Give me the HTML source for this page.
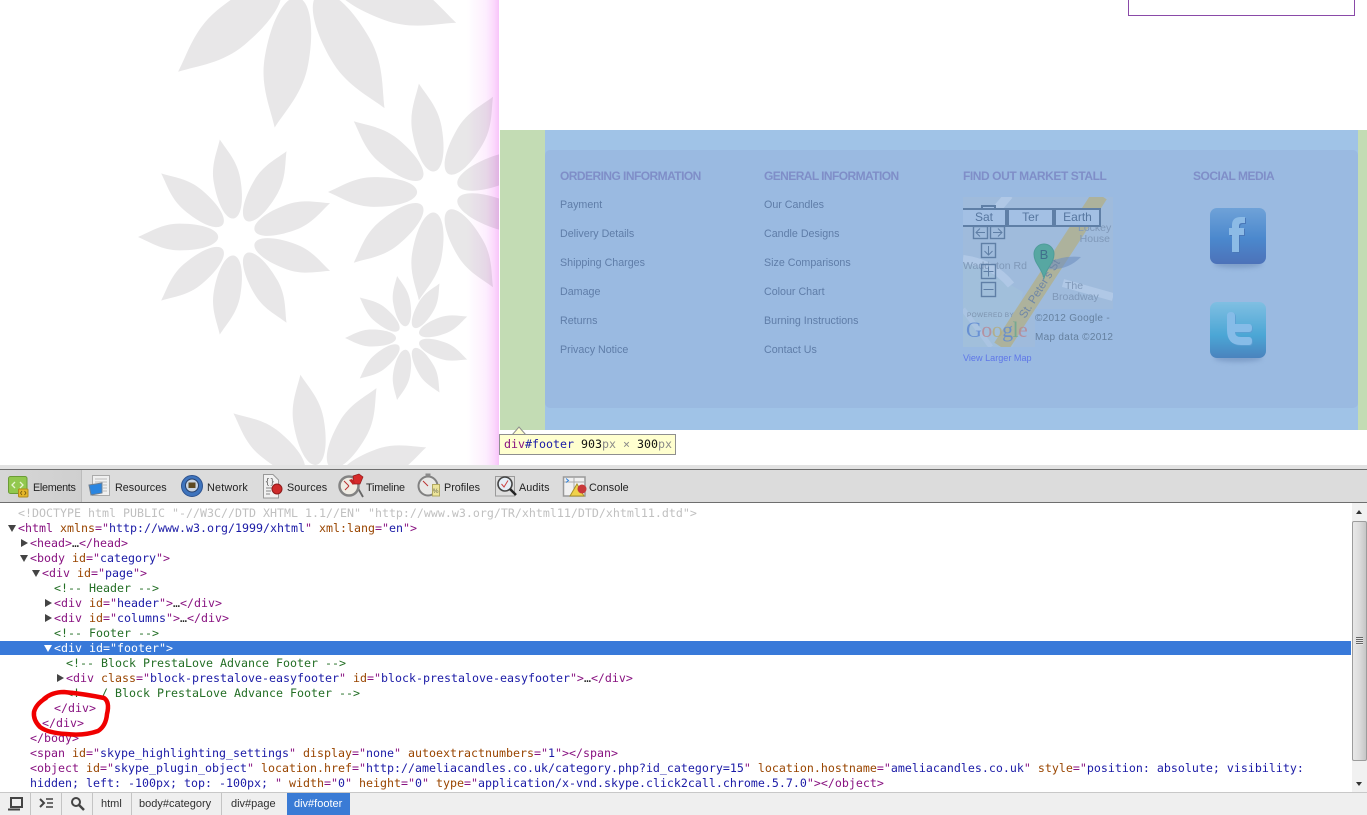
<!DOCTYPE html>
<html lang="en">
<head>
<meta charset="utf-8">
<title>Footer inspector</title>
<style>
html,body{margin:0;padding:0;width:1367px;height:815px;overflow:hidden;background:#fff}
body{position:relative;font-family:"Liberation Sans",Arial,sans-serif}
.a{position:absolute}
.h{position:absolute;font:bold 12px/14px "Liberation Sans",sans-serif;color:#7f8ec8;white-space:nowrap}
.k{position:absolute;font:10.7px/14px "Liberation Sans",sans-serif;color:#5f7da8;white-space:nowrap}
.l{position:absolute;font:11.63px/15px "DejaVu Sans Mono",monospace;white-space:pre;color:#222}
.t{color:#881280}.n{color:#994500}.v{color:#1a1aa6}.c{color:#236e25}.d{color:#c0c0c0}
.dn,.rt{position:absolute;width:0;height:0}
.dn{border-left:4px solid transparent;border-right:4px solid transparent;border-top:7px solid #444}
.rt{border-top:4px solid transparent;border-bottom:4px solid transparent;border-left:7px solid #444}
.tb{position:absolute;top:481px;font:10.8px/14px "Liberation Sans",sans-serif;color:#222;white-space:nowrap}
.cr{position:absolute;top:797px;font:11px/14px "Liberation Sans",sans-serif;color:#303030;white-space:nowrap}
.sep{position:absolute;top:793px;width:1px;height:22px;background:#c4c4c4}
.mb{position:absolute;box-sizing:border-box;border:2px solid #5f7fa6;background:#a3c0e4;color:#56769f;font:12px/14px "Liberation Sans",sans-serif;text-align:center}
.mt{position:absolute;font:10.5px/11px "Liberation Sans",sans-serif;color:#7f98b8;white-space:nowrap}
</style>
</head>
<body>

<!-- flower background -->
<svg class="a" style="left:0;top:0" width="499" height="465" viewBox="0 0 499 465">
<defs>
<path id="p" d="M19 0C19-7 33-13.500 58-13.500C76-13.500 88-5 100 0C88 5 76 13.500 58 13.500C33 13.500 19 7 19 0Z"/>
<g id="f">
<use href="#p" transform="rotate(180)"/><use href="#p" transform="rotate(220)"/><use href="#p" transform="rotate(260)"/>
<use href="#p" transform="rotate(300)"/><use href="#p" transform="rotate(340)"/><use href="#p" transform="rotate(20)"/>
<use href="#p" transform="rotate(60)"/><use href="#p" transform="rotate(100)"/><use href="#p" transform="rotate(140)"/>
</g>
<linearGradient id="pk" x1="0" x2="1" y1="0" y2="0">
<stop offset="0" stop-color="#fff"/><stop offset=".6" stop-color="#fdeefe"/><stop offset=".85" stop-color="#fbd8fc"/><stop offset="1" stop-color="#f8c4fa"/>
</linearGradient>
</defs>
<g fill="#e8e7e8">
<use href="#f" transform="translate(303 -33) scale(1.63)"/>
<use href="#f" transform="translate(237 237) scale(.99)"/>
<use href="#f" transform="translate(438 192) scale(1.1)"/>
<use href="#f" transform="translate(408 338) scale(.63)"/>
<use href="#f" transform="translate(320 486) scale(1.13)"/>
</g>
<rect x="467" y="0" width="32" height="465" fill="url(#pk)" style="mix-blend-mode:multiply"/>
</svg>

<!-- top right box -->
<div class="a" style="left:1128px;top:-2px;width:225px;height:16px;border:1px solid #8a4aa8"></div>

<!-- footer highlight -->
<div class="a" style="left:500px;top:130px;width:867px;height:300px;background:#c3dcb4"></div>
<div class="a" style="left:545px;top:130px;width:813px;height:300px;background:#a0c3e7"></div>
<div class="a" style="left:545px;top:150px;width:813px;height:258px;background:#9abae1;border-radius:5px"></div>

<div class="h" style="left:560px;top:169px;letter-spacing:-.55px">ORDERING INFORMATION</div>
<div class="h" style="left:764px;top:169px;letter-spacing:-.58px">GENERAL INFORMATION</div>
<div class="h" style="left:963px;top:169px;letter-spacing:-.43px">FIND OUT MARKET STALL</div>
<div class="h" style="left:1193px;top:169px;letter-spacing:-.5px">SOCIAL MEDIA</div>

<div class="k" style="left:560px;top:198px">Payment</div>
<div class="k" style="left:560px;top:227px">Delivery Details</div>
<div class="k" style="left:560px;top:256px">Shipping Charges</div>
<div class="k" style="left:560px;top:285px">Damage</div>
<div class="k" style="left:560px;top:314px">Returns</div>
<div class="k" style="left:560px;top:343px">Privacy Notice</div>
<div class="k" style="left:764px;top:198px">Our Candles</div>
<div class="k" style="left:764px;top:227px">Candle Designs</div>
<div class="k" style="left:764px;top:256px">Size Comparisons</div>
<div class="k" style="left:764px;top:285px">Colour Chart</div>
<div class="k" style="left:764px;top:314px">Burning Instructions</div>
<div class="k" style="left:764px;top:343px">Contact Us</div>

<!-- map -->
<svg class="a" style="left:963px;top:197px" width="150" height="150" viewBox="0 0 150 150">
<rect width="150" height="150" fill="#9fbbdc"/>
<path d="M0 60L60 95L50 150H0Z" fill="#a1bfdb"/>
<path d="M46 -2L22 26" stroke="#b0c8e6" stroke-width="9" fill="none"/>
<path d="M0 62Q30 66 48 88" stroke="#b0c8e6" stroke-width="8" fill="none"/>
<path d="M100 86L150 100" stroke="#b0c8e6" stroke-width="8" fill="none"/>
<path d="M0 112L28 150" stroke="#aac4e2" stroke-width="5" fill="none"/>
<path d="M137 -2L38 150" stroke="#adb29c" stroke-width="16" fill="none"/>
<path d="M72 112V150H150V112Z" fill="#9abae1"/>
<path d="M84 66Q100 58 118 60Q104 74 84 72Z" fill="#6f8fc0" opacity=".6"/>
<text transform="translate(62 122) rotate(-58)" font-family="Liberation Sans,sans-serif" font-size="11.5" fill="#6f87a6">St. Peter's St</text>
<path d="M81 81C78 70 71 66 71 57A10 10 0 0 1 91 57C91 66 84 70 81 81Z" fill="#57a7a2" stroke="#4f9c9a"/>
<text x="81" y="62" font-family="Liberation Sans,sans-serif" font-size="13" fill="#406f8c" text-anchor="middle">B</text>
<text x="4" y="120" font-family="Liberation Sans,sans-serif" font-size="6.5" fill="#7c92ad" letter-spacing=".3">POWERED BY</text>
<text x="3" y="140" font-family="Liberation Serif,serif" font-size="22" letter-spacing="-.6" opacity=".85"><tspan fill="#5f8ad2">G</tspan><tspan fill="#b78a96">o</tspan><tspan fill="#b4ad7e">o</tspan><tspan fill="#5f8ad2">g</tspan><tspan fill="#6da78f">l</tspan><tspan fill="#b78a96">e</tspan></text>
</svg>
<div class="mt" style="left:1078px;top:223px;width:32px;text-align:right;line-height:10.500px">Lockey<br>House</div>
<div class="mt" style="left:963px;top:261px;width:26px;overflow:hidden">Wadd</div>
<div class="mt" style="left:996px;top:261px">ton Rd</div>
<div class="mt" style="left:1052px;top:281px;width:44px;text-align:center">The<br>Broadway</div>
<div class="a" style="left:1035px;top:313px;font:10px/12px 'Liberation Sans',sans-serif;color:#65809f;white-space:nowrap;letter-spacing:.3px">©2012 Google -</div>
<div class="a" style="left:1035px;top:332px;font:10px/12px 'Liberation Sans',sans-serif;color:#65809f;white-space:nowrap;letter-spacing:.3px">Map data ©2012</div>
<div class="a" style="left:963px;top:352px;font:9.1px/12px 'Liberation Sans',sans-serif;color:#5f77e8;white-space:nowrap">View Larger Map</div>

<div class="mb" style="left:981px;top:205px;width:15px;height:6px"></div>
<div class="mb" style="left:963px;top:208px;width:44px;height:19px;border-left:0">Sat</div>
<div class="mb" style="left:1007px;top:208px;width:47px;height:19px">Ter</div>
<div class="mb" style="left:1054px;top:208px;width:47px;height:19px">Earth</div>
<svg class="a" style="left:972px;top:225px" width="34" height="74" viewBox="0 0 34 74" fill="none" stroke="#5f7fa6">
<rect x="1.5" y="1.5" width="14" height="12" stroke-width="1.4"/>
<rect x="18.5" y="1.5" width="14" height="12" stroke-width="1.4"/>
<rect x="9.5" y="18.5" width="14" height="14" stroke-width="1.4"/>
<rect x="9.5" y="39.5" width="14" height="14" stroke-width="1.4"/>
<rect x="9.5" y="57.5" width="14" height="14" stroke-width="1.4"/>
<path d="M4 7.5H13M8 3.5L4 7.5L8 11.5M21 7.5H30M26 3.5L30 7.5L26 11.5M16.500 21V30M12.500 26L16.500 30L20.500 26M11.500 46.500H21.500M16.500 41.500V51.500M11.500 64.500H21.500"/>
</svg>

<!-- social -->
<div class="a" style="left:1214px;top:260px;width:48px;height:8px;border-radius:50%;background:#7f9fc9;filter:blur(2px)"></div>
<div class="a" style="left:1214px;top:354px;width:48px;height:8px;border-radius:50%;background:#7f9fc9;filter:blur(2px)"></div>
<div class="a" style="left:1210px;top:208px;width:56px;height:56px;border-radius:7px;background:linear-gradient(#6fa2d8,#4b88cd 55%,#4c72b9)"></div>
<div class="a" style="left:1210px;top:302px;width:56px;height:56px;border-radius:7px;background:linear-gradient(#80bfe2,#4ba6d5 60%,#4a83be)"></div>
<svg class="a" style="left:1210px;top:208px" width="56" height="150" viewBox="0 0 56 150">
<path id="ff" d="M22 44V27H19V20H22V17Q22 9 31 9H35V15H32Q29 15 29 18V20H34V27H29V44Z" fill="#4a78b8" transform="translate(1 1)"/>
<path d="M22 44V27H19V20H22V17Q22 9 31 9H35V15H32Q29 15 29 18V20H34V27H29V44Z" fill="#8cbbe6"/>
<path d="M17 108Q17 104 21 104Q25 104 25 108V116H39Q42 116 42 120Q42 124 39 124H25Q25 129 31 129H39Q42 129 42 133Q42 137 39 137H31Q17 137 17 122Z" fill="#5d9ed2" transform="translate(.8 .8)"/>
<path d="M17 108Q17 104 21 104Q25 104 25 108V116H39Q42 116 42 120Q42 124 39 124H25Q25 129 31 129H39Q42 129 42 133Q42 137 39 137H31Q17 137 17 122Z" fill="#86bce8"/>
</svg>

<!-- tooltip -->
<svg class="a" style="left:512px;top:426px" width="16" height="10" viewBox="0 0 16 10"><path d="M0 9L7 1L14 9" fill="#ffffcf" stroke="#8f8f8f"/></svg>
<div class="a" style="left:499px;top:434px;width:175px;height:19px;background:#ffffcf;border:1px solid #8f8f8f;font:11.63px/19px 'DejaVu Sans Mono',monospace;white-space:pre;text-indent:4px"><span style="color:#881280">div</span><span style="color:#1a1aa6">#footer</span> <span style="color:#111">903</span><span style="color:#888">px × </span><span style="color:#111">300</span><span style="color:#888">px</span></div>

<!-- devtools toolbar -->
<div class="a" style="left:0;top:465px;width:1367px;height:4px;background:#e2e2e2"></div>
<div class="a" style="left:0;top:469px;width:1367px;height:34px;background:#dcdcdc;border-top:1px solid #6e6e6e;border-bottom:1px solid #6e6e6e;box-sizing:border-box"></div>
<div class="a" style="left:0;top:470px;width:81px;height:32px;background:linear-gradient(90deg,#d6d6d6,#cfcfcf);border-right:1px solid #bcbcbc"></div>

<svg class="a" style="left:0;top:470px" width="640" height="32" viewBox="0 0 640 32">
<!-- elements -->
<rect x="8.500" y="6.500" width="18.500" height="17" rx="2" fill="#92c84e" stroke="#6b9c35"/>
<path d="M15 12L12 15L15 18M20 12L23 15L20 18" stroke="#e8f5d0" stroke-width="1.3" fill="none"/>
<rect x="18.500" y="19" width="9.500" height="8" rx="1" fill="#e4b62a" stroke="#b08b1c"/>
<path d="M22 21L20.500 23L22 25M24.500 21L26 23L24.500 25" stroke="#6e5510" fill="none" stroke-width=".8"/>
<!-- resources -->
<rect x="92.500" y="5.500" width="17" height="20" fill="#f0f0f0" stroke="#aaa"/>
<path d="M95 9H107M95 12H107M103 15H107M103 18H107M103 21H107" stroke="#bbb"/>
<path d="M89 15L102 13V23L91 25Z" fill="#2a85e0" stroke="#6f7f90"/>
<!-- network -->
<circle cx="192" cy="16" r="10.500" fill="#3f74bd" stroke="#2c5290"/>
<circle cx="192" cy="15.500" r="6.500" fill="#c9d4e2" stroke="#28406a"/>
<rect x="188.500" y="12.500" width="7" height="5.500" fill="#5e4a22"/>
<!-- sources -->
<path d="M263.500 4.500H273L278.500 10V28H263.500Z" fill="#f1f1f1" stroke="#999"/>
<text x="265" y="14" font-size="8" font-family="DejaVu Sans Mono,monospace" fill="#555">{}</text>
<path d="M266 18H272M266 21H271M266 24H270" stroke="#888"/>
<circle cx="277" cy="19" r="5" fill="#cf2b2b" stroke="#8e1b1b"/>
<!-- timeline -->
<path d="M355 13L363 27" stroke="#666" stroke-width="1.8"/>
<circle cx="349" cy="16" r="9.500" fill="#efece4" stroke="#838383" stroke-width="2.500"/>
<path d="M349 16L344 11M349 16L345 20" stroke="#b33"/>
<path d="M353 6L359 4L363 7L360 14L354 14Z" fill="#d72a2a" stroke="#8e1b1b" stroke-width=".7"/>
<path d="M352 9L355 12L353 15L349 10Z" fill="#c42222"/>
<!-- profiles -->
<circle cx="428" cy="16" r="9.500" fill="#e8e8e6" stroke="#808080" stroke-width="2"/>
<rect x="425.500" y="3.500" width="5" height="3" fill="#8a8a8a"/>
<path d="M428 16L423 11" stroke="#b33"/>
<rect x="432.500" y="14.500" width="7" height="11.500" fill="#ece49a" stroke="#b0a860"/>
<text x="432.800" y="23" font-size="6.500" font-family="Liberation Sans,sans-serif" fill="#665">%</text>
<!-- audits -->
<rect x="495.500" y="6.500" width="19" height="19.500" fill="#dedede" stroke="#9a9a9a"/>
<circle cx="505" cy="14" r="7" fill="#e6eef6" stroke="#444" stroke-width="1.6"/>
<path d="M501.500 14L504 17L508 10.500" stroke="#c44" fill="none"/>
<path d="M510 19L516 25" stroke="#222" stroke-width="2.500"/>
<!-- console -->
<rect x="563.500" y="7" width="21.500" height="19" fill="#f0f0f0" stroke="#999" stroke-width="1.500"/>
<path d="M564 12H584M574 7V25" stroke="#aaa"/>
<path d="M566 8.500L568.500 10.500L566 12.500" stroke="#2f82dc" fill="none"/>
<path d="M577 14L584 26H570Z" fill="#f0d24a" stroke="#a8902a"/>
<circle cx="582" cy="19" r="4.500" fill="#c8383a"/>
</svg>

<div class="tb" style="left:33px;letter-spacing:-.3px">Elements</div>
<div class="tb" style="left:115px">Resources</div>
<div class="tb" style="left:207px;letter-spacing:.2px">Network</div>
<div class="tb" style="left:287px;letter-spacing:.1px">Sources</div>
<div class="tb" style="left:366px;letter-spacing:-.2px">Timeline</div>
<div class="tb" style="left:444px">Profiles</div>
<div class="tb" style="left:519px;letter-spacing:.1px">Audits</div>
<div class="tb" style="left:589px">Console</div>

<!-- DOM tree -->
<div class="a" style="left:0;top:641px;width:1351px;height:14px;background:#3879d9"></div>

<div class="l d" style="left:18px;top:506px">&lt;!DOCTYPE html PUBLIC "-//W3C//DTD XHTML 1.1//EN" "http://www.w3.org/TR/xhtml11/DTD/xhtml11.dtd"&gt;</div>
<div class="dn" style="left:8px;top:525px"></div>
<div class="l" style="left:18px;top:521px"><span class="t">&lt;html</span> <span class="n">xmlns</span><span class="t">="</span><span class="v">http://www.w3.org/1999/xhtml</span><span class="t">"</span> <span class="n">xml:lang</span><span class="t">="</span><span class="v">en</span><span class="t">"&gt;</span></div>
<div class="rt" style="left:21px;top:539px"></div>
<div class="l" style="left:30px;top:536px"><span class="t">&lt;head&gt;</span>…<span class="t">&lt;/head&gt;</span></div>
<div class="dn" style="left:20px;top:555px"></div>
<div class="l" style="left:30px;top:551px"><span class="t">&lt;body</span> <span class="n">id</span><span class="t">="</span><span class="v">category</span><span class="t">"&gt;</span></div>
<div class="dn" style="left:32px;top:570px"></div>
<div class="l" style="left:42px;top:566px"><span class="t">&lt;div</span> <span class="n">id</span><span class="t">="</span><span class="v">page</span><span class="t">"&gt;</span></div>
<div class="l c" style="left:54px;top:581px">&lt;!-- Header --&gt;</div>
<div class="rt" style="left:45px;top:599px"></div>
<div class="l" style="left:54px;top:596px"><span class="t">&lt;div</span> <span class="n">id</span><span class="t">="</span><span class="v">header</span><span class="t">"&gt;</span>…<span class="t">&lt;/div&gt;</span></div>
<div class="rt" style="left:45px;top:614px"></div>
<div class="l" style="left:54px;top:611px"><span class="t">&lt;div</span> <span class="n">id</span><span class="t">="</span><span class="v">columns</span><span class="t">"&gt;</span>…<span class="t">&lt;/div&gt;</span></div>
<div class="l c" style="left:54px;top:626px">&lt;!-- Footer --&gt;</div>
<div class="dn" style="left:44px;top:645px;border-top-color:#fff"></div>
<div class="l" style="left:54px;top:641px;color:#fff">&lt;div id="footer"&gt;</div>
<div class="l c" style="left:66px;top:656px">&lt;!-- Block PrestaLove Advance Footer --&gt;</div>
<div class="rt" style="left:57px;top:674px"></div>
<div class="l" style="left:66px;top:671px"><span class="t">&lt;div</span> <span class="n">class</span><span class="t">="</span><span class="v">block-prestalove-easyfooter</span><span class="t">"</span> <span class="n">id</span><span class="t">="</span><span class="v">block-prestalove-easyfooter</span><span class="t">"&gt;</span>…<span class="t">&lt;/div&gt;</span></div>
<div class="l c" style="left:66px;top:686px">&lt;!-- / Block PrestaLove Advance Footer --&gt;</div>
<div class="l t" style="left:54px;top:701px">&lt;/div&gt;</div>
<div class="l t" style="left:42px;top:716px">&lt;/div&gt;</div>
<div class="l t" style="left:30px;top:731px">&lt;/body&gt;</div>
<div class="l" style="left:30px;top:746px"><span class="t">&lt;span</span> <span class="n">id</span><span class="t">="</span><span class="v">skype_highlighting_settings</span><span class="t">"</span> <span class="n">display</span><span class="t">="</span><span class="v">none</span><span class="t">"</span> <span class="n">autoextractnumbers</span><span class="t">="</span><span class="v">1</span><span class="t">"&gt;&lt;/span&gt;</span></div>
<div class="l" style="left:30px;top:761px"><span class="t">&lt;object</span> <span class="n">id</span><span class="t">="</span><span class="v">skype_plugin_object</span><span class="t">"</span> <span class="n">location.href</span><span class="t">="</span><span class="v">http://ameliacandles.co.uk/category.php?id_category=15</span><span class="t">"</span> <span class="n">location.hostname</span><span class="t">="</span><span class="v">ameliacandles.co.uk</span><span class="t">"</span> <span class="n">style</span><span class="t">="</span><span class="v">position: absolute; visibility:</span></div>
<div class="l" style="left:30px;top:776px"><span class="v">hidden; left: -100px; top: -100px; </span><span class="t">"</span> <span class="n">width</span><span class="t">="</span><span class="v">0</span><span class="t">"</span> <span class="n">height</span><span class="t">="</span><span class="v">0</span><span class="t">"</span> <span class="n">type</span><span class="t">="</span><span class="v">application/x-vnd.skype.click2call.chrome.5.7.0</span><span class="t">"&gt;&lt;/object&gt;</span></div>

<!-- red hand-drawn circle -->
<svg class="a" style="left:0;top:680px" width="130" height="70" viewBox="0 680 130 70">
<path d="M44 699Q52 692 64 692Q85 694 104 698Q110 702 107 714Q106 726 98 731Q84 736 66 734Q48 733 40 727Q33 720 34 712Q36 704 46 698" fill="none" stroke="#f00000" stroke-width="4.500" stroke-linecap="round"/>
</svg>

<!-- scrollbar -->
<div class="a" style="left:1352px;top:503px;width:15px;height:289px;background:#f1f1f1"></div>
<div class="a" style="left:1352px;top:521px;width:15px;height:240px;box-sizing:border-box;border:1px solid #9c9c9c;border-radius:2px;background:linear-gradient(90deg,#e8e8e8,#dcdcdc 50%,#c6c6c6)"></div>
<div class="a" style="left:1356px;top:637px;width:7px;height:8px;background:repeating-linear-gradient(#666 0 1px,#e8e8e8 1px 2px)"></div>
<div class="dn" style="left:1356px;top:510px;border-top:0;border-bottom:4px solid #333;border-left-width:3.5px;border-right-width:3.5px"></div>
<div class="dn" style="left:1356px;top:782px;border-top:4px solid #333;border-left-width:3.5px;border-right-width:3.5px"></div>

<!-- bottom bar -->
<div class="a" style="left:0;top:792px;width:1367px;height:23px;background:#efefef;border-top:1px solid #c8c8c8;box-sizing:border-box"></div>
<div class="sep" style="left:30px"></div><div class="sep" style="left:61px"></div><div class="sep" style="left:92px"></div>
<div class="sep" style="left:131px"></div><div class="sep" style="left:221px"></div>
<svg class="a" style="left:0;top:793px" width="92" height="22" viewBox="0 0 92 22" fill="none" stroke="#444">
<rect x="11" y="5" width="11" height="9" stroke-width="2"/>
<path d="M8 16.500H20" stroke-width="2"/>
<path d="M40 6L44 10L40 14" stroke-width="2"/>
<path d="M46 6H53M47 10H53M46 14H53" stroke-width="1.6"/>
<circle cx="76" cy="9" r="4" stroke-width="2"/>
<path d="M79 12L84 17" stroke-width="2.500"/>
</svg>
<div class="a" style="left:287px;top:793px;width:63px;height:22px;background:#3a7bd5"></div>
<div class="cr" style="left:101px">html</div>
<div class="cr" style="left:139px">body#category</div>
<div class="cr" style="left:231px">div#page</div>
<div class="cr" style="left:294px;color:#fff">div#footer</div>

</body>
</html>
